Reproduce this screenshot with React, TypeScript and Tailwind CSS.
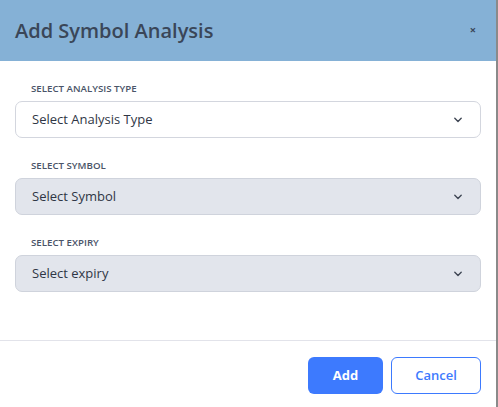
import React from "react";

function Chevron() {
  return (
    <svg width="10" height="6" viewBox="0 0 10 6" fill="none" className="shrink-0">
      <path d="M1.8 1.3 L5 4.4 L8.2 1.3" stroke="#3f4654" strokeWidth="1.4" strokeLinecap="round" strokeLinejoin="round" />
    </svg>
  );
}

function Field({ label, placeholder, filled }: { label: string; placeholder: string; filled?: boolean }) {
  return (
    <div className="flex flex-col">
      <div className="pl-4 text-[9.7px] leading-[12px] font-semibold text-[#4a5468] uppercase mb-[6px]">{label}</div>
      <div
        className={`h-[37px] rounded-[7px] border flex items-center justify-between pl-4 pr-[17px] ${
          filled ? "bg-[#e2e5ec] border-[#cfd3dc]" : "bg-white border-[#d3d6de]"
        }`}
      >
        <span className="text-[13px] text-[#2f3645]">{placeholder}</span>
        <Chevron />
      </div>
    </div>
  );
}

export default function App() {
  return (
    <div className="w-[498px] h-[407px] bg-white flex flex-col border-r-2 border-[#8a8a8a]" style={{ fontFamily: "'Open Sans', 'Noto Sans', sans-serif" }}>
      <div className="h-[61px] shrink-0 bg-[#85b1d6] flex items-center justify-between pl-[15px] pr-[20px]">
        <h1 className="text-[20px] font-semibold text-[#3a4658]">Add Symbol Analysis</h1>
        <span className="text-[11px] font-bold text-[#3a4658]">×</span>
      </div>
      <div className="flex-1 flex flex-col gap-[22px] pt-[22px] pl-[15px] pr-[15px]">
        <Field label="Select Analysis Type" placeholder="Select Analysis Type" />
        <Field label="Select Symbol" placeholder="Select Symbol" filled />
        <Field label="Select expiry" placeholder="Select expiry" filled />
      </div>
      <div className="h-[67px] shrink-0 border-t border-[#e2e3ea] flex items-start justify-end gap-2 pt-[16px] pr-[15px]">
        <button className="w-[75px] h-[37px] rounded-[6px] bg-[#3d7afe] text-white text-[13px] font-bold">Add</button>
        <button className="w-[90px] h-[37px] rounded-[6px] border border-[#3d7afe] bg-white text-[#3d7afe] text-[13px] font-semibold">Cancel</button>
      </div>
    </div>
  );
}
